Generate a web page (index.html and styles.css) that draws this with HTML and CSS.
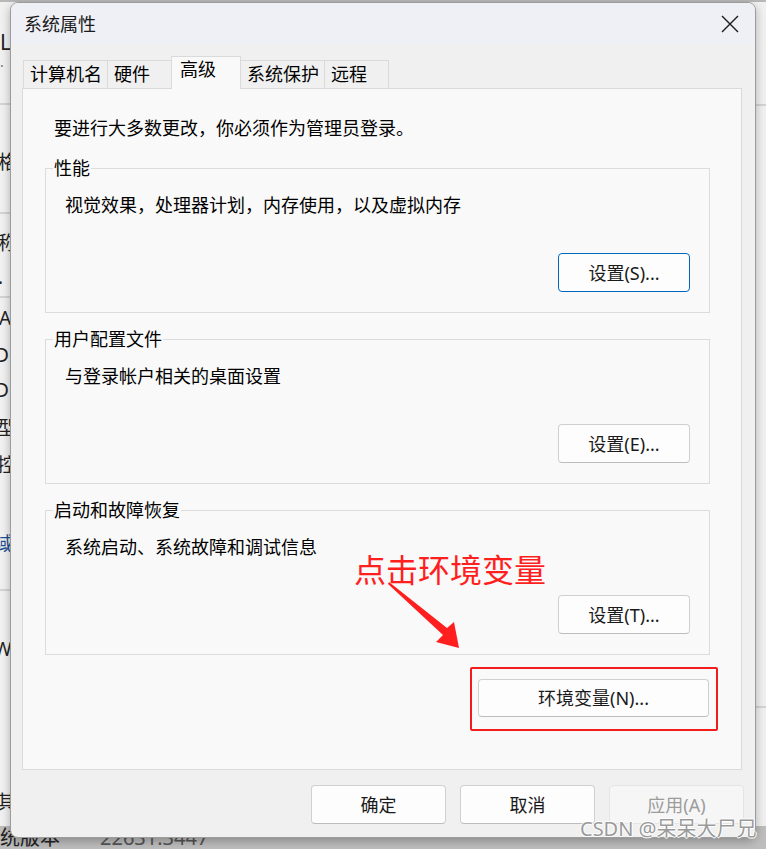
FILE: index.html
```html
<!DOCTYPE html>
<html lang="zh-CN">
<head>
<meta charset="utf-8">
<title>系统属性</title>
<link rel="stylesheet" href="styles.css">
</head>
<body>
<div class="desk">
  <div class="desk-top"></div>
  <div class="desk-line dl1"></div>
  <div class="desk-line dl2"></div>
  <div class="desk-line dl3"></div>
  <div class="desk-line dl4"></div>
  <div class="desk-line dl5"></div>
  <div class="desk-line dl6"></div>
  <span class="frag f1">L</span>
  <span class="frag f2">·</span>
  <span class="frag f3">格</span>
  <span class="frag f4">称</span>
  <span class="frag f5">·</span>
  <span class="frag f6">A</span>
  <span class="frag f7">D</span>
  <span class="frag f8">D</span>
  <span class="frag f9">型</span>
  <span class="frag f10">控</span>
  <span class="frag f11 frag-link">域</span>
  <span class="frag f12">W</span>
  <span class="frag f13">其</span>
  <div class="desk-bottom"><span class="db-label">统版本</span><span class="db-value">22631.3447</span></div>
</div>

<div class="dialog">
  <div class="titlebar">
    <span class="title">系统属性</span>
    <span class="close" aria-label="关闭"><svg width="18" height="18" viewBox="0 0 18 18"><path d="M1 1 L17 17 M17 1 L1 17" stroke="#1b1b1b" stroke-width="1.4" fill="none"/></svg></span>
  </div>
  <div class="tabs">
    <div class="tab">计算机名</div>
    <div class="tab">硬件</div>
    <div class="tab tab-active">高级</div>
    <div class="tab">系统保护</div>
    <div class="tab">远程</div>
  </div>
  <div class="panel">
    <p class="intro">要进行大多数更改，你必须作为管理员登录。</p>
    <fieldset class="group">
      <legend>性能</legend>
      <p class="desc">视觉效果，处理器计划，内存使用，以及虚拟内存</p>
      <button class="btn btn-set btn-default">设置(S)...</button>
    </fieldset>
    <fieldset class="group">
      <legend>用户配置文件</legend>
      <p class="desc">与登录帐户相关的桌面设置</p>
      <button class="btn btn-set">设置(E)...</button>
    </fieldset>
    <fieldset class="group">
      <legend>启动和故障恢复</legend>
      <p class="desc">系统启动、系统故障和调试信息</p>
      <button class="btn btn-set">设置(T)...</button>
    </fieldset>
    <div class="env-row"><button class="btn btn-env">环境变量(N)...</button></div>
  </div>
  <div class="footer">
    <button class="btn btn-foot">确定</button>
    <button class="btn btn-foot">取消</button>
    <button class="btn btn-foot btn-disabled">应用(A)</button>
  </div>
</div>

<div class="annot-text">点击环境变量</div>
<svg class="annot-arrow" width="80" height="75" viewBox="385 578 80 75">
  <polygon points="389,582 447,628 454,622 459,648 436,642 443,635 388,584" fill="#ff1f1f"/>
</svg>
<div class="annot-box"></div>

<div class="watermark">CSDN @呆呆大尸兄</div>
</body>
</html>
```

FILE: styles.css
```css
html, body {
  margin: 0;
  padding: 0;
}

body {
  width: 766px;
  height: 849px;
  overflow: hidden;
  position: relative;
  background: #ececec;
  font-family: "Noto Sans", "Noto Sans CJK SC", sans-serif;
  color: #000;
}

/* ---------- desktop / background window ---------- */
.desk {
  position: absolute;
  inset: 0;
  background: #f1f1f1;
}

.desk-top {
  position: absolute;
  left: 0;
  top: 0;
  width: 766px;
  height: 2px;
  background: #b8b8b8;
}

.desk-line {
  position: absolute;
  height: 2px;
  background: #d4d4d4;
}

.dl1 { left: 0; top: 103px; width: 12px; }
.dl2 { left: 0; top: 212px; width: 12px; }
.dl3 { left: 0; top: 296px; width: 12px; }
.dl4 { left: 0; top: 589px; width: 12px; }
.dl5 { left: 754px; top: 104px; width: 12px; }
.dl6 { left: 754px; top: 706px; width: 12px; }

.frag {
  position: absolute;
  font-size: 19px;
  line-height: 24px;
  color: #222;
  font-family: "Noto Sans", "Noto Sans CJK SC", sans-serif;
}

.frag-link { color: #1d4f91; }

.f1 { left: 0; top: 30px; font-size: 21px; }
.f2 { left: 0; top: 54px; color: #777; font-size: 14px; }
.f3 { left: -2px; top: 150px; }
.f4 { left: -2px; top: 231px; }
.f5 { left: -2px; top: 271px; }
.f6 { left: -1px; top: 306px; }
.f7 { left: -5px; top: 343px; }
.f8 { left: -5px; top: 378px; }
.f9 { left: -3px; top: 416px; }
.f10 { left: -3px; top: 453px; }
.f11 { left: -6px; top: 532px; }
.f12 { left: -6px; top: 637px; }
.f13 { left: -3px; top: 790px; }

.desk-bottom {
  position: absolute;
  left: 0;
  top: 826px;
  width: 766px;
  height: 23px;
  background: #bdbdbd;
  display: flex;
  gap: 40px;
  font-size: 20px;
  line-height: 24px;
  color: #222;
}

.db-value {
  color: #555;
}

/* ---------- dialog ---------- */
.dialog {
  position: absolute;
  left: 10px;
  top: 2px;
  width: 746px;
  height: 836px;
  box-sizing: border-box;
  border: 1px solid #9c9c9c;
  border-radius: 8px;
  background: #f0f0f0;
  box-shadow: 0 3px 10px rgba(0, 0, 0, 0.28);
  overflow: hidden;
  display: flex;
  flex-direction: column;
}

.titlebar {
  height: 41px;
  flex: none;
  background: #eff0f6;
  display: flex;
  align-items: center;
  justify-content: space-between;
  padding: 0 16px 0 13px;
}

.title {
  font-size: 18px;
  line-height: 24px;
  color: #1a1a1a;
}

.close {
  display: flex;
  width: 18px;
  height: 18px;
}

.tabs {
  height: 44px;
  flex: none;
  display: flex;
  align-items: flex-end;
  padding-left: 13px;
  position: relative;
  z-index: 1;
}

.tab {
  box-sizing: border-box;
  height: 28px;
  min-width: 65px;
  padding: 1px 5px 0 6px;
  border: 1px solid #dadada;
  border-bottom: none;
  background: #f0f0f0;
  font-size: 18px;
  line-height: 24px;
  margin-left: -1px;
}

.tab-active {
  height: 33px;
  min-width: 70px;
  padding: 0 6px 0 8px;
  background: #f9f9f9;
  margin-bottom: -1px;
  position: relative;
  z-index: 2;
}

.panel {
  box-sizing: border-box;
  height: 682px;
  margin: 0 13px 0 11px;
  border: 1px solid #dadada;
  background: #f9f9f9;
  padding: 27px 31px 0 22px;
  display: flex;
  flex-direction: column;
}

.intro {
  margin: 0 0 0 9px;
  font-size: 18px;
  line-height: 24px;
}

.group {
  margin: 16px 0 0 0;
  padding: 0 19px 20px 7px;
  border: 1px solid #dcdcdc;
  display: flex;
  flex-direction: column;
  min-width: 0;
}

.group + .group {
  margin-top: 14px;
}

.group legend {
  padding: 0 1px;
  font-size: 18px;
  line-height: 24px;
}

.desc {
  margin: 13px 0 0 12px;
  font-size: 18px;
  line-height: 24px;
}

.btn {
  box-sizing: border-box;
  font-family: "Noto Sans", "Noto Sans CJK SC", sans-serif;
  font-size: 18px;
  line-height: 24px;
  color: #1a1a1a;
  background: #fdfdfd;
  border: 1px solid #d0d0d0;
  border-bottom-color: #bdbdbd;
  border-radius: 4px;
  padding: 0;
}

.btn-set {
  align-self: flex-end;
  width: 132px;
  height: 39px;
  margin-top: 36px;
}

.btn-default {
  border: 1px solid #0067c0;
}

.env-row {
  display: flex;
  justify-content: flex-end;
  margin-top: 24px;
  margin-right: 1px;
}

.btn-env {
  width: 231px;
  height: 38px;
}

.footer {
  flex: 1;
  display: flex;
  justify-content: flex-end;
  gap: 14px;
  padding: 15px 11px 0 0;
}

.btn-foot {
  width: 135px;
  height: 39px;
}

.btn-disabled {
  color: #9c9c9c;
  background: #f6f6f6;
  border-color: #e4e4e4;
}

/* ---------- annotations ---------- */
.annot-text {
  position: absolute;
  left: 354px;
  top: 548px;
  font-size: 32px;
  line-height: 40px;
  color: #ff1f1f;
  font-family: "Noto Sans CJK SC", sans-serif;
}

.annot-arrow {
  position: absolute;
  left: 385px;
  top: 578px;
}

.annot-box {
  position: absolute;
  left: 470px;
  top: 667px;
  width: 248px;
  height: 64px;
  box-sizing: border-box;
  border: 2px solid #f21c1c;
  border-radius: 2px;
}

.watermark {
  position: absolute;
  left: 580px;
  top: 816px;
  font-size: 20px;
  line-height: 26px;
  color: #9a9a9a;
  font-family: "Noto Sans", "Noto Sans CJK SC", sans-serif;
  text-shadow: 1px 0 0 #fff, -1px 0 0 #fff, 0 1px 0 #fff, 0 -1px 0 #fff;
}
```
